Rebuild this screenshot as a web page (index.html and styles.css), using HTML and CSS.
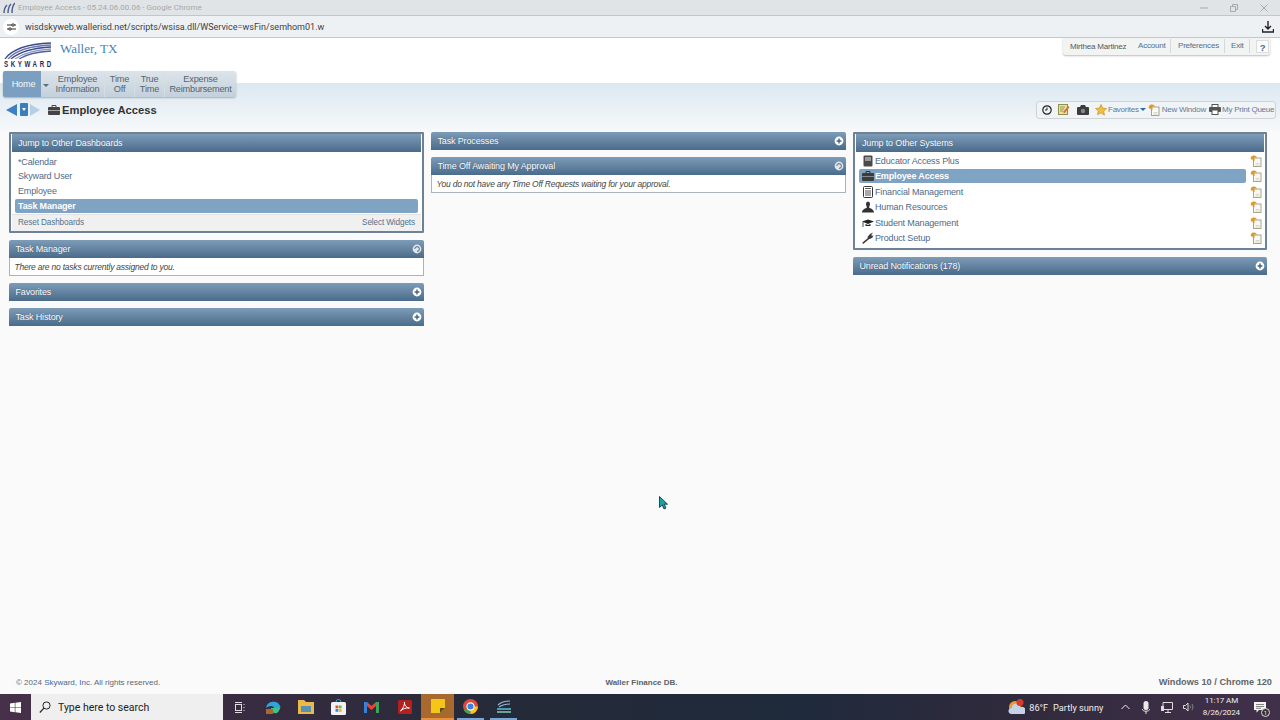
FILE: index.html
```html
<!DOCTYPE html>
<html lang="en">
<head>
<meta charset="utf-8">
<title>Employee Access</title>
<link rel="stylesheet" href="styles.css">
</head>
<body>
<svg class="defs" width="0" height="0" aria-hidden="true">
  <symbol id="plus" viewBox="0 0 10 10"><circle cx="5" cy="5" r="4.4" fill="#fff"/><path d="M5 2.6v4.800M2.600 5h4.800" stroke="#46637f" stroke-width="1.400"/></symbol>
  <symbol id="refresh" viewBox="0 0 10 10"><circle cx="5" cy="5" r="4.400" fill="#dfe6ec"/><path d="M2.800 5a2.300 2.300 0 1 1 2.200 2.300" fill="none" stroke="#6d8399" stroke-width="1.200"/></symbol>
  <symbol id="copy" viewBox="0 0 12 12"><rect x="3.500" y="3" width="7.500" height="8.500" fill="#fbfaf2" stroke="#8e8e78" stroke-width=".8"/><path d="M5.500 8.500h4M5.500 10h4" stroke="#c9c9c0" stroke-width=".7"/><path d="M1 4.500C.2 2.500 1.500.5 4 .5c1.500 0 2.500.7 3 2H4.500v3.500H2.800V4.500z" fill="#dc9a2e"/></symbol>
</svg>

<div class="titlebar">
  <svg class="fav" width="12" height="11" viewBox="0 0 12 11"><path d="M1 11c0-4 1-6 3-8M5 11c0-5 1-7 3-9M9 11c0-5 1-8 3-10" fill="none" stroke="#4c5c8c" stroke-width="1.400"/></svg>
  <span class="title-text">Employee Access - 05.24.06.00.06 - Google Chrome</span>
  <div class="winctl">
    <svg width="8" height="8" viewBox="0 0 8 8"><path d="M0 4h8" stroke="#a4aaae"/></svg>
    <svg width="8" height="8" viewBox="0 0 8 8"><path d="M.5 2.500h5v5h-5zM2.500 2.500v-2h5v5h-2" fill="none" stroke="#a4aaae"/></svg>
    <svg width="8" height="8" viewBox="0 0 8 8"><path d="M.5.5l7 7M7.500.5l-7 7" stroke="#a4aaae"/></svg>
  </div>
</div>

<div class="urlbar">
  <span class="site-btn"><svg width="9" height="8" viewBox="0 0 9 8"><path d="M0 2h5M7 2h2M0 6h2M4 6h5" stroke="#333" stroke-width="1.100"/><circle cx="6" cy="2" r="1.200" fill="none" stroke="#333"/><circle cx="3" cy="6" r="1.200" fill="none" stroke="#333"/></svg></span>
  <span class="url">wisdskyweb.wallerisd.net/scripts/wsisa.dll/WService=wsFin/semhom01.w</span>
  <svg class="dl" width="12" height="12" viewBox="0 0 12 12"><path d="M6 0v7.500M3 5l3 3 3-3M.5 8v3h11V8" fill="none" stroke="#222" stroke-width="1.400"/></svg>
</div>

<div class="app">
  <header class="header">
    <div class="logo">
      <svg width="48" height="17" viewBox="0 0 48 17"><g fill="none" stroke-width="1.300"><path d="M1 17C8 7 24 2 47 1" stroke="#3b4a8c"/><path d="M4 17C11 9 26 4 47 3" stroke="#6a76ae"/><path d="M7 17C14 11 28 6 47 5" stroke="#3b4a8c"/><path d="M11 17C18 12 30 8 47 7" stroke="#8d97c2"/><path d="M15 17C21 13 32 10 47 9" stroke="#5460a0"/></g></svg>
      <span class="logo-text">SKYWARD</span>
    </div>
    <div class="district">Waller, TX</div>
    <div class="userbox">
      <span class="uname">Mirthea Martinez</span>
      <a class="ulink ul-account">Account</a>
      <a class="ulink ul-pref">Preferences</a>
      <a class="ulink ul-exit">Exit</a>
      <a class="uhelp">?</a>
    </div>
    <nav class="nav">
      <a class="nav-home">Home</a>
      <span class="nav-caret"></span>
      <a class="nav-item ni-emp">Employee<br>Information</a>
      <a class="nav-item ni-time">Time<br>Off</a>
      <a class="nav-item ni-true">True<br>Time</a>
      <a class="nav-item ni-exp">Expense<br>Reimbursement</a>
    </nav>
  </header>

  <div class="subbar">
    <div class="crumbs">
      <svg width="11" height="12" viewBox="0 0 11 12"><path d="M11 0v12L0 6z" fill="#3d7fc0"/></svg>
      <span class="crumb-mid"><i></i></span>
      <svg width="10" height="12" viewBox="0 0 10 12"><path d="M0 0v12l10-6z" fill="#b7cfe2"/></svg>
    </div>
    <svg class="brief" width="12" height="10" viewBox="0 0 12 10"><path d="M4 2V.5h4V2" fill="none" stroke="#444" stroke-width="1"/><rect y="2" width="12" height="8" rx="1" fill="#444"/><path d="M0 5.500h12" stroke="#ccc" stroke-width=".7"/></svg>
    <h1 class="page-title">Employee Access</h1>
    <div class="toolbar">
      <svg class="t-clock" width="10" height="10" viewBox="0 0 10 10"><circle cx="5" cy="5" r="4.200" fill="none" stroke="#222" stroke-width="1.200"/><path d="M5 2.500V5H3" fill="none" stroke="#222"/></svg>
      <svg class="t-note" width="12" height="11" viewBox="0 0 12 11"><rect x=".5" y=".5" width="9" height="10" fill="#e9e29a" stroke="#8f8f50"/><path d="M2 3h5M2 5h4M2 7h3" stroke="#77773f" stroke-width=".7"/><path d="M5 8l5-6 1.500 1.200-5 6z" fill="#c9782c"/></svg>
      <svg class="t-cam" width="12" height="10" viewBox="0 0 12 10"><rect y="2" width="12" height="8" rx="1" fill="#3c3c3c"/><path d="M3 2l1-2h4l1 2z" fill="#3c3c3c"/><circle cx="6" cy="6" r="2.200" fill="#888"/></svg>
      <svg class="t-star" width="12" height="12" viewBox="0 0 12 12"><path d="M6 .5l1.700 3.600 3.800.5-2.800 2.700.7 3.900L6 8.800l-3.400 1.900.7-3.900L.5 4.600l3.800-.5z" fill="#f2c040" stroke="#c78e20" stroke-width=".7"/></svg>
      <span class="t-fav">Favorites</span><span class="t-caret"></span>
      <svg class="t-copy"><use href="#copy"/></svg>
      <span class="t-new">New Window</span>
      <svg class="t-print" width="12" height="11" viewBox="0 0 12 11"><rect x="3" y=".5" width="6" height="3" fill="#fff" stroke="#555"/><rect y="3" width="12" height="5" rx="1" fill="#555"/><rect x="3" y="6" width="6" height="4.500" fill="#fff" stroke="#555"/></svg>
      <span class="t-queue">My Print Queue</span>
    </div>
  </div>

  <main class="columns">
    <section class="col">
      <div class="jump">
        <h2 class="phead">Jump to Other Dashboards</h2>
        <ul class="dash-list">
          <li>*Calendar</li>
          <li>Skyward User</li>
          <li>Employee</li>
          <li class="sel">Task Manager</li>
        </ul>
        <div class="dash-foot"><a>Reset Dashboards</a><a>Select Widgets</a></div>
      </div>
      <div class="panel">
        <h2 class="phead">Task Manager<svg class="pico"><use href="#refresh"/></svg></h2>
        <p class="pbody">There are no tasks currently assigned to you.</p>
      </div>
      <div class="panel"><h2 class="phead">Favorites<svg class="pico"><use href="#plus"/></svg></h2></div>
      <div class="panel"><h2 class="phead">Task History<svg class="pico"><use href="#plus"/></svg></h2></div>
    </section>

    <section class="col">
      <div class="panel"><h2 class="phead">Task Processes<svg class="pico"><use href="#plus"/></svg></h2></div>
      <div class="panel">
        <h2 class="phead">Time Off Awaiting My Approval<svg class="pico"><use href="#refresh"/></svg></h2>
        <p class="pbody">You do not have any Time Off Requests waiting for your approval.</p>
      </div>
    </section>

    <section class="col">
      <div class="jump">
        <h2 class="phead">Jump to Other Systems</h2>
        <ul class="sys-list">
          <li><span class="sys-name"><svg class="sico" viewBox="0 0 12 12"><rect x="1.500" y=".5" width="9" height="11" rx="1" fill="#4a4a4a"/><rect x="3" y="2" width="6" height="4" fill="#9a9a9a"/></svg>Educator Access Plus</span><svg class="sys-copy"><use href="#copy"/></svg></li>
          <li class="sel"><span class="sys-name"><svg class="sico" viewBox="0 0 12 12"><path d="M4 3V1.500h4V3" fill="none" stroke="#333"/><rect y="3" width="12" height="8" rx="1" fill="#3c3c3c"/><path d="M0 6.500h12" stroke="#aaa" stroke-width=".7"/></svg>Employee Access</span><svg class="sys-copy"><use href="#copy"/></svg></li>
          <li><span class="sys-name"><svg class="sico" viewBox="0 0 12 12"><rect x="1.500" y=".5" width="9" height="11" rx="1" fill="none" stroke="#333"/><path d="M3 2.500h6M3 5h6M3 7h6M3 9h6" stroke="#555" stroke-width="1.200"/></svg>Financial Management</span><svg class="sys-copy"><use href="#copy"/></svg></li>
          <li><span class="sys-name"><svg class="sico" viewBox="0 0 12 12"><path d="M4 3a2 2.500 0 1 1 4 0c0 1.500-.8 2.500-1 3.500 1 1 5 1.500 5 5H0c0-3.500 4-4 5-5C4.800 5.500 4 4.500 4 3z" fill="#333"/></svg>Human Resources</span><svg class="sys-copy"><use href="#copy"/></svg></li>
          <li><span class="sys-name"><svg class="sico" viewBox="0 0 12 12"><path d="M6 2.500L0 4.500l6 2.500 6-2.500z" fill="#222"/><path d="M3.500 7v2h5V7L6 8z" fill="#222"/><path d="M1 5v5" stroke="#222" stroke-width=".8"/></svg>Student Management</span><svg class="sys-copy"><use href="#copy"/></svg></li>
          <li><span class="sys-name"><svg class="sico" viewBox="0 0 12 12"><path d="M.7 11.300l6-5" stroke="#3c3c3c" stroke-width="1.500"/><path d="M6 7l-.5-2L8 2l3-1.500L9.300 3 10 4l1.500-1-1 2.500-2.500 1.500z" fill="#3c3c3c"/></svg>Product Setup</span><svg class="sys-copy"><use href="#copy"/></svg></li>
        </ul>
      </div>
      <div class="panel"><h2 class="phead">Unread Notifications (178)<svg class="pico"><use href="#plus"/></svg></h2></div>
    </section>
  </main>

  <footer class="footer">
    <span class="copyr">© 2024 <a>Skyward, Inc.</a> All rights reserved.</span>
    <span class="db">Waller Finance DB.</span>
    <span class="browser">Windows 10 / Chrome 120</span>
  </footer>
  <svg class="cursor" width="9" height="14" viewBox="0 0 9 14"><path d="M.5.5v11l2.800-2.500L5 13l2-1-1.800-3.800H8.500z" fill="#16a3a8" stroke="#123" stroke-width=".8"/></svg>
</div>

<div class="taskbar">
  <span class="tb-start"><svg width="11" height="11" viewBox="0 0 11 11"><path d="M0 1.500l4.800-.7v4.400H0zM5.400.7L11 0v5.200H5.400zM0 5.800h4.800v4.400L0 9.500zM5.400 5.800H11V11l-5.600-.8z" fill="#fff"/></svg></span>
  <div class="tb-search">
    <svg width="12" height="12" viewBox="0 0 12 12"><circle cx="7.500" cy="4.500" r="3.600" fill="none" stroke="#222"/><path d="M5 7.200L.8 11.500" stroke="#222" stroke-width="1.200"/></svg>
    <span>Type here to search</span>
  </div>
  <div class="tb-apps">
    <span class="app-slot"><svg width="11" height="11" viewBox="0 0 11 11"><rect x="1.500" y="2.500" width="6" height="6" fill="none" stroke="#ddd"/><path d="M1 .5h7M1 10.500h7M10 2v1M10 5v1M10 8v1" stroke="#ddd"/></svg></span>
    <span class="app-slot"><svg width="16" height="16" viewBox="0 0 16 16"><path d="M1 9a7.500 7.500 0 0 1 14.500-1c0 2-2 2.500-4 2.500C9 10.500 9 7 6.500 7 4 7 2 8 1 9z" fill="#2fa5d8"/><path d="M15 9H6c-1 3 2 6 6 5 1.500-1 2.500-3 3-5z" fill="#3ec48a"/><rect x="1" y="10" width="7" height="5" fill="#a8692f"/></svg></span>
    <span class="app-slot"><svg width="16" height="14" viewBox="0 0 16 14"><path d="M0 0h6l2 2h8v12H0z" fill="#e9b949"/><rect x="3" y="6" width="10" height="6" fill="#5c8fb5"/></svg></span>
    <span class="app-slot"><svg width="15" height="16" viewBox="0 0 15 16"><rect y="3" width="15" height="13" rx="1.500" fill="#f2f2f2"/><path d="M5 3a2.500 2.500 0 0 1 5 0" fill="none" stroke="#2fa5d8"/><rect x="4.500" y="6.500" width="2.800" height="2.800" fill="#e5522d"/><rect x="7.800" y="6.500" width="2.800" height="2.800" fill="#7cb82f"/><rect x="4.500" y="10" width="2.800" height="2.800" fill="#2f8fd8"/><rect x="7.800" y="10" width="2.800" height="2.800" fill="#f2b61f"/></svg></span>
    <span class="app-slot"><svg width="15" height="12" viewBox="0 0 15 12"><path d="M0 12V1l3 0 4.500 4L12 1h3v11h-3V5L7.500 9 3 5v7z" fill="#e8443a"/><path d="M12 12V1h3v11z" fill="#3fa35a"/><path d="M0 12V1h3v11z" fill="#3a7fd8"/></svg></span>
    <span class="app-slot"><svg width="14" height="14" viewBox="0 0 14 14"><rect width="14" height="14" rx="1.500" fill="#b3201e"/><path d="M2.500 11C5 9 7 4 6.500 2 6 4 8 8 11.500 8 8 7.500 4 9 2.500 11z" fill="none" stroke="#fff"/></svg></span>
    <span class="app-slot active"><svg width="14" height="14" viewBox="0 0 14 14"><path d="M0 0h14v9l-5 5H0z" fill="#f5c518"/><path d="M14 9H9v5z" fill="#5a4a20"/></svg></span>
    <span class="app-slot run"><svg width="15" height="15" viewBox="0 0 15 15"><circle cx="7.500" cy="7.500" r="7.500" fill="#e0483a"/><path d="M7.500 7.500L1 11.200A7.500 7.500 0 0 0 7.500 15z" fill="#3ca650"/><path d="M7.500 7.500V15A7.500 7.500 0 0 0 15 7.500z" fill="#f5c518"/><circle cx="7.500" cy="7.500" r="3.600" fill="#3b80e8" stroke="#fff" stroke-width="1.100"/></svg></span>
    <span class="app-slot run"><svg width="16" height="13" viewBox="0 0 16 13"><path d="M2 5C5 2 10 1 14 1M3 7c3-2 7-3 11-3" fill="none" stroke="#9ab4d8" stroke-width="1.200"/><path d="M1 9h14" stroke="#58c0d8" stroke-width="1.500"/><path d="M1 12h14" stroke="#78d0b8" stroke-width="1.500"/></svg></span>
  </div>
  <div class="tb-tray">
    <svg class="tr-weather" width="17" height="16" viewBox="0 0 17 16"><circle cx="7" cy="8" r="6" fill="#ed9a35"/><path d="M3 15a3 3 0 0 1 1-6 4 4 0 0 1 8-.5 3.300 3.300 0 0 1 4 6.500z" fill="#c5d3e8"/><circle cx="12" cy="3.500" r="3.500" fill="#d63a30"/></svg>
    <span class="tr-temp">86°F</span>
    <span class="tr-sky">Partly sunny</span>
    <svg class="tr-chev" width="9" height="6" viewBox="0 0 9 6"><path d="M.5 5l4-4 4 4" fill="none" stroke="#eee"/></svg>
    <svg class="tr-mic" width="8" height="13" viewBox="0 0 8 13"><rect x="1.500" width="5" height="9" rx="2.500" fill="#e8e8e8"/><path d="M0 8c1 3 7 3 8 0M4 10.500V13" fill="none" stroke="#e8e8e8"/></svg>
    <svg class="tr-net" width="12" height="11" viewBox="0 0 12 11"><path d="M2 .5h9.500v7H2zM4 10.500h6M7 7.500v3" fill="none" stroke="#ddd"/><path d="M0 4h3v5H0z" fill="#ddd"/></svg>
    <svg class="tr-vol" width="11" height="10" viewBox="0 0 11 10"><path d="M.5 3.500h2L5 1v8L2.500 6.500h-2z" fill="none" stroke="#ddd"/><path d="M7 3.500c.7 1 .7 2 0 3M9 2c1.200 2 1.200 4 0 6" fill="none" stroke="#888"/></svg>
    <div class="tr-clock"><span>11:17 AM</span><span>8/26/2024</span></div>
    <span class="tr-note"><svg width="12" height="11" viewBox="0 0 12 11"><path d="M0 0h12v8H5L2.500 10.500V8H0z" fill="#f2f2f2"/><path d="M2 2.500h8M2 4.500h8M2 6.300h5" stroke="#555" stroke-width=".7"/></svg><b class="tr-badge">1</b></span>
  </div>
</div>
</body>
</html>
```

FILE: styles.css
```css
* { box-sizing: border-box; }
html, body { margin: 0; padding: 0; height: 720px; overflow: hidden; }
body { display: flex; flex-direction: column; width: 1280px; font-family: "Liberation Sans", Arial, sans-serif; background: #fafafa; }
.defs { position: absolute; }
h1, h2, p, ul { margin: 0; padding: 0; }
ul { list-style: none; }
svg { flex: none; }

.titlebar { height: 16px; flex: none; display: flex; align-items: center; background: #e0e4e6; border-bottom: 1px solid #c3c7c9; padding-left: 3px; }
.fav { margin-right: 3px; }
.title-text { font: 8px Roboto, sans-serif; color: #a4a9ac; }
.winctl { margin-left: auto; display: flex; gap: 22px; padding-right: 12px; }

.urlbar { height: 22px; flex: none; display: flex; align-items: center; background: #eef1f4; border-bottom: 1px solid #c4c7ca; }
.site-btn { width: 16px; height: 16px; margin-left: 3px; border-radius: 50%; background: #fff; display: flex; align-items: center; justify-content: center; }
.url { margin-left: 6px; font: 9px Roboto, sans-serif; color: #3c4043; }
.dl { margin-left: auto; margin-right: 6px; }

.app { flex: 1; min-height: 0; position: relative; display: flex; flex-direction: column; }

.header { height: 45px; flex: none; position: relative; background: #fff; display: flex; align-items: flex-start; }
.logo { margin: 4px 0 0 4px; width: 49px; display: flex; flex-direction: column; }
.logo svg { display: block; }
.logo-text { font-size: 9.500px; line-height: 9px; font-weight: 700; color: #25285a; letter-spacing: 4px; white-space: nowrap; transform: scaleX(.65); transform-origin: left center; }
.district { margin: 3px 0 0 7px; font: 13px/16px "Liberation Serif", serif; color: #4484b8; }
.userbox { margin-left: auto; margin-right: 10px; width: 207px; height: 17px; padding-bottom: 1px; display: flex; align-items: center; background: #f2f3f3; border-radius: 0 0 3px 3px; box-shadow: 0 1px 2px #bbb; font-size: 8px; letter-spacing: -.2px; color: #4e5b66; }
.uname { margin-left: 7px; width: 68px; white-space: nowrap; }
.ulink { color: #50708f; white-space: nowrap; }
.ul-account { width: 33px; border-right: 1px solid #d5d9dc; margin-right: 7px; line-height: 14px; }
.ul-pref { width: 47px; border-right: 1px solid #d5d9dc; margin-right: 6px; line-height: 14px; }
.ul-exit { width: 19px; border-right: 1px solid #d5d9dc; margin-right: 6px; line-height: 14px; }
.uhelp { width: 13px; height: 13px; line-height: 13px; text-align: center; font-weight: 700; font-size: 9.500px; color: #3e6c96; background: #fafbfb; border: 1px solid #ddd; }

.nav { position: absolute; left: 3px; top: 33px; width: 233px; height: 26px; display: flex; background: linear-gradient(#dde4ea, #c3d1dc); border-radius: 2px; box-shadow: 0 1px 2px #a5b0b8; font-size: 9.200px; letter-spacing: -.2px; line-height: 10px; color: #56646f; }
.nav-home { width: 38px; padding-left: 3px; background: #7b9fc0; color: #f4f8fb; display: flex; align-items: center; justify-content: center; border-radius: 2px 0 0 2px; }
.nav-caret { width: 10px; position: relative; }
.nav-caret::after { content: ""; position: absolute; left: 2px; top: 13px; border: 3px solid transparent; border-top: 3px solid #5c6c78; border-bottom: 0; }
.nav-item { display: flex; align-items: center; justify-content: center; text-align: center; border-left: 1px solid #d6dee4; }
.ni-emp { width: 53px; border-left: 0; }
.ni-time { width: 30px; }
.ni-true { width: 30px; }
.ni-exp { width: 72px; }

.subbar { height: 49px; flex: none; display: flex; align-items: center; padding: 4px 4px 0 6px; background: linear-gradient(#dbe8f1, #f7f9fa); }
.crumbs { display: flex; align-items: center; gap: 1px; }
.crumb-mid { width: 8px; height: 13px; margin: 0 1px 0 2px; background: #3c7fb8; border-radius: 1px; display: flex; align-items: center; justify-content: center; }
.crumb-mid i { border: 2.500px solid transparent; border-top: 3px solid #fff; border-bottom: 0; }
.brief { margin-left: 8px; }
.page-title { margin-left: 2px; font-size: 11.200px; line-height: 14px; font-weight: 700; color: #333; }
.toolbar { margin-left: auto; width: 240px; height: 18px; display: flex; align-items: center; background: #f1f4f6; border: 1px solid #cfd3d6; border-radius: 3px; font-size: 8px; letter-spacing: -.24px; color: #5f7a94; padding-left: 5px; white-space: nowrap; }
.t-note { margin-left: 6px; }
.t-cam { margin-left: 7px; }
.t-star { margin-left: 6px; }
.t-fav { margin-left: 1px; }
.t-caret { margin-left: 1px; border: 3px solid transparent; border-top: 3px solid #2a6aa8; border-bottom: 0; }
.t-copy { margin-left: 2px; width: 12px; height: 12px; }
.t-new { margin-left: 2px; }
.t-print { margin-left: 3px; }
.t-queue { margin-left: 1px; }

.columns { flex: 1; min-height: 0; display: grid; grid-template-columns: 415px 415px 414px; gap: 7px; padding-left: 9px; }
.col { display: flex; flex-direction: column; gap: 7px; }

.phead { height: 18px; position: relative; display: flex; align-items: center; padding-left: 6.500px; font-size: 9px; letter-spacing: -.15px; font-weight: 400; color: #fff; background: linear-gradient(#7c9cb8, #4b6b8b); border-radius: 2px 2px 0 0; text-shadow: 0 0 1px #3a5570; }
.pico { position: absolute; right: 2px; top: 4px; width: 10px; height: 10px; }
.panel { border-radius: 2px; background: #fff; }
.pbody { height: 18px; border: 1px solid #a9b3bc; border-top: 0; padding-left: 4.500px; font-size: 8.500px; letter-spacing: -.22px; line-height: 18px; font-style: italic; color: #444; }

.jump { border: 2px solid #6d8297; padding: 0 1px; background: #fff; border-radius: 1px; }
.jump .phead { padding-left: 6px; border-radius: 0; }
.dash-list { padding: 2.500px 3px 0; }
.dash-list li { height: 14.700px; line-height: 14.700px; padding-left: 3px; font-size: 9px; letter-spacing: -.15px; color: #4f6a88; }
.dash-list li.sel, .sys-list li.sel .sys-name { background: #7fa3c3; color: #fff; font-weight: 700; border-radius: 2px; }
.dash-foot { margin-top: .5px; height: 17px; display: flex; justify-content: space-between; align-items: center; padding: 0 6px; background: #f0f0f0; border-top: 1px solid #e2e2e2; font-size: 8.200px; letter-spacing: -.12px; color: #54708e; }
.sys-list { padding: 1.300px 2px 2.300px 3px; }
.sys-list li { height: 15.400px; display: flex; align-items: center; justify-content: space-between; font-size: 9px; letter-spacing: -.15px; color: #4f6a88; }
.sys-name { flex: 1; margin-right: 4px; height: 14px; display: flex; align-items: center; padding-left: 3px; }
.sico { width: 12px; height: 12px; margin-right: 1px; flex: none; }
.sys-copy { width: 12px; height: 12px; flex: none; }

.footer { height: 24px; flex: none; display: grid; grid-template-columns: 1fr 1fr 1fr; align-items: center; padding: 0 8px 0 16px; font-size: 8px; color: #60686e; }
.footer a { color: #3d6a98; }
.db { text-align: center; font-weight: 700; padding-right: 5px; color: #5a6268; }
.browser { text-align: right; font-size: 9.200px; font-weight: 700; color: #5f676c; }
.cursor { position: absolute; left: 659px; top: 458px; }

.taskbar { height: 26px; flex: none; display: flex; align-items: stretch; background: linear-gradient(90deg, #47304a 0, #3a2c42 220px, #252a38 500px, #1f2a3c 800px, #2f2a3c 1000px, #42304a 1280px); color: #f0f0f0; }
.tb-start { width: 31px; display: flex; align-items: center; justify-content: center; }
.tb-search { width: 192px; background: #efefef; display: flex; align-items: center; gap: 7px; padding-left: 8px; font: 10.500px Roboto, sans-serif; color: #222; }
.tb-apps { display: flex; }
.app-slot { width: 33px; display: flex; align-items: center; justify-content: center; }
.active { background: #a8692f; border-bottom: 2px solid #e9913a; }
.run { border-bottom: 2px solid #7aa5d8; margin: 0 3px; width: 27px; }
.tb-tray { margin-left: auto; display: flex; align-items: center; font: 9.200px Roboto, sans-serif; color: #eee; }
.tr-temp { margin-left: 4.500px; }
.tr-sky { margin-left: 5px; }
.tr-chev { margin-left: 17.500px; }
.tr-mic { margin-left: 12.500px; }
.tr-net { margin-left: 11px; }
.tr-vol { margin-left: 9.500px; }
.tr-clock { margin-left: 9px; padding-bottom: 1px; display: flex; flex-direction: column; align-items: center; font-size: 8px; letter-spacing: -.1px; line-height: 12px; }
.tr-note { margin: 0 14px; position: relative; display: flex; }
.tr-badge { position: absolute; right: -4px; bottom: -4px; width: 9px; height: 9px; border: 1px solid #ddd; border-radius: 50%; background: #333; font-size: 6px; line-height: 7px; text-align: center; font-weight: 400; }
```
